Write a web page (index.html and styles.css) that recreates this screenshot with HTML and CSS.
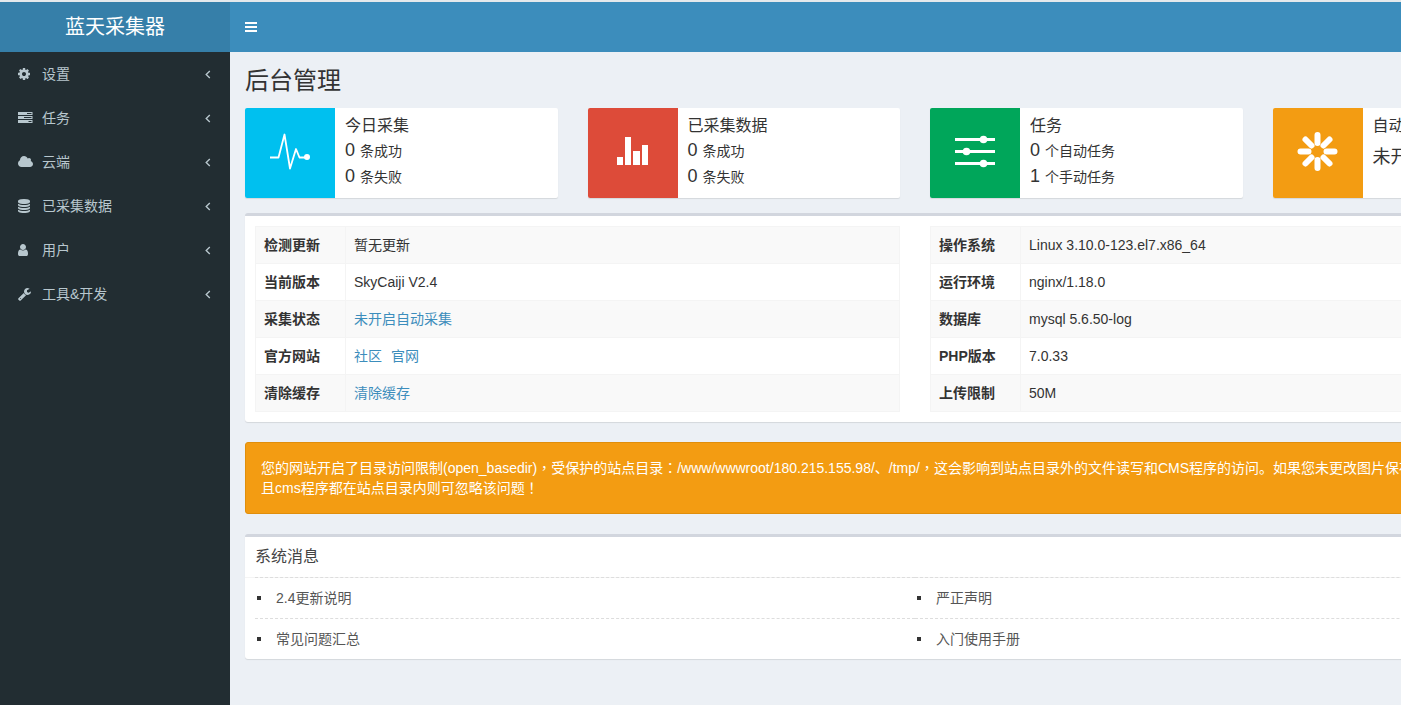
FILE: index.html
```html
<!DOCTYPE html>
<html lang="zh-CN">
<head>
<meta charset="utf-8">
<title>后台管理 - 蓝天采集器</title>
<link rel="stylesheet" href="styles.css">
</head>
<body>
<div class="wrapper">
  <header class="main-header">
    <a class="logo" href="#">蓝天采集器</a>
    <nav class="navbar">
      <button class="sidebar-toggle" type="button" aria-label="切换菜单">
        <svg width="12" height="14" viewBox="0 0 12 14" fill="currentColor"><path d="M0 2h12v2H0zM0 6h12v2H0zM0 10h12v2H0z"/></svg>
      </button>
    </nav>
  </header>
  <div class="body-row">
    <aside class="main-sidebar">
      <ul class="menu">
        <li><a href="#">
          <svg class="menu-icon" viewBox="128 0 2304 1792"><path d="M1152 896q0-106-75-181t-181-75-181 75-75 181 75 181 181 75 181-75 75-181zm512-109v222q0 12-8 23t-20 13l-185 28q-19 54-39 91 35 50 107 138 10 12 10 25t-9 23q-27 37-99 108t-94 71q-12 0-26-9l-138-108q-44 23-91 38-16 136-29 186-7 28-36 28h-222q-14 0-24.5-8.5t-11.5-21.5l-28-184q-49-16-90-37l-141 107q-10 9-25 9-14 0-25-11-126-114-165-168-7-10-7-23 0-12 8-23 15-21 51-66.5t54-70.5q-27-50-41-99l-183-27q-13-2-21-12.5t-8-23.5v-222q0-12 8-23t19-13l186-28q14-46 39-92-40-57-107-138-10-12-10-24 0-10 9-23 26-36 98.5-107.5t94.5-71.5q13 0 26 10l138 107q44-23 91-38 16-136 29-186 7-28 36-28h222q14 0 24.5 8.5t11.5 21.5l28 184q49 16 90 37l142-107q9-9 24-9 13 0 25 10 129 119 165 170 7 8 7 22 0 12-8 23-15 21-51 66.5t-54 70.5q26 50 41 98l183 28q13 2 21 12.5t8 23.5z"/></svg>
          <span>设置</span><svg class="arrow" viewBox="0 0 6 10"><path d="M5 1L1 5l4 4"/></svg></a></li>
        <li><a href="#">
          <svg class="menu-icon" viewBox="0 0 18 14"><path fill-rule="evenodd" d="M0 1h14.500v3H0zM9 2v1h4.500V2zM0 5h14.500v3H0zM6 6v1h7.500V6zM0 9h14.500v3H0zM10.500 10v1h3v-1z"/></svg>
          <span>任务</span><svg class="arrow" viewBox="0 0 6 10"><path d="M5 1L1 5l4 4"/></svg></a></li>
        <li><a href="#">
          <svg class="menu-icon" viewBox="64 0 2304 1792"><path d="M1984 1152q0 159-112.5 271.5t-271.5 112.5h-1088q-185 0-316.5-131.5t-131.5-316.5q0-132 71-241.5t187-163.5q-2-28-2-43 0-212 150-362t362-150q158 0 286.5 88t187.5 230q70-62 166-62 106 0 181 75t75 181q0 75-41 138 129 30 213 134.5t84 239.5z"/></svg>
          <span>云端</span><svg class="arrow" viewBox="0 0 6 10"><path d="M5 1L1 5l4 4"/></svg></a></li>
        <li><a href="#">
          <svg class="menu-icon" viewBox="128 0 2304 1792"><path d="M896 768q237 0 443-43t325-127v170q0 69-103 128t-280 93.5-385 34.5-385-34.5-280-93.5-103-128v-170q119 84 325 127t443 43zm0 768q237 0 443-43t325-127v170q0 69-103 128t-280 93.5-385 34.5-385-34.5-280-93.5-103-128v-170q119 84 325 127t443 43zm0-384q237 0 443-43t325-127v170q0 69-103 128t-280 93.5-385 34.5-385-34.5-280-93.5-103-128v-170q119 84 325 127t443 43zm0-1152q208 0 385 34.5t280 93.5 103 128v128q0 69-103 128t-280 93.5-385 34.5-385-34.5-280-93.5-103-128v-128q0-69 103-128t280-93.5 385-34.5z"/></svg>
          <span>已采集数据</span><svg class="arrow" viewBox="0 0 6 10"><path d="M5 1L1 5l4 4"/></svg></a></li>
        <li><a href="#">
          <svg class="menu-icon" viewBox="256 0 2304 1792"><path d="M1536 1399q0 109-62.5 187t-150.5 78h-854q-88 0-150.5-78t-62.5-187q0-85 8.5-160.5t31.5-152 58.5-131 94-89 134.5-34.5q131 128 313 128t313-128q76 0 134.5 34.5t94 89 58.5 131 31.5 152 8.5 160.5zm-256-887q0 159-112.5 271.5t-271.5 112.5-271.5-112.5-112.5-271.5 112.5-271.5 271.5-112.5 271.5 112.5 112.5 271.5z"/></svg>
          <span>用户</span><svg class="arrow" viewBox="0 0 6 10"><path d="M5 1L1 5l4 4"/></svg></a></li>
        <li><a href="#">
          <svg class="menu-icon" viewBox="64 0 2304 1792"><path d="M448 1472q0-26-19-45t-45-19-45 19-19 45 19 45 45 19 45-19 19-45zm644-420l-682 682q-37 37-90 37-52 0-91-37l-106-108q-38-36-38-90 0-53 38-91l681-681q39 98 114.5 173.5t173.5 114.5zm634-435q0 39-23 106-47 134-164.5 217.5t-258.5 83.5q-185 0-316.5-131.5t-131.5-316.5 131.5-316.5 316.5-131.5q58 0 121.5 16.5t107.5 46.5q16 11 16 28t-16 28l-293 169v224l193 107q5-3 79-48.5t135.5-81 70.5-35.5q15 0 23.5 10t8.5 25z"/></svg>
          <span>工具&amp;开发</span><svg class="arrow" viewBox="0 0 6 10"><path d="M5 1L1 5l4 4"/></svg></a></li>
      </ul>
    </aside>
    <main class="content">
      <h1 class="page-title">后台管理</h1>
      <section class="cards">
        <div class="info-box">
          <div class="info-icon aqua"><svg viewBox="0 0 90 90"><path d="M25 49.500h8.500l6-23 5.500 34 6-19.500 3.500 8.500H62" fill="none" stroke="#fff" stroke-width="1.800" stroke-linejoin="round"/><circle cx="62" cy="49" r="3" fill="#fff"/></svg></div>
          <div class="info-content"><h2>今日采集</h2><p><b>0 </b>条成功</p><p><b>0 </b>条失败</p></div>
        </div>
        <div class="info-box">
          <div class="info-icon red"><svg viewBox="0 0 90 90" fill="#fff"><path d="M29 49h6v8h-6zM37 29h6v28h-6zM45 43h7v14h-7zM54 37h6v20h-6z"/></svg></div>
          <div class="info-content"><h2>已采集数据</h2><p><b>0 </b>条成功</p><p><b>0 </b>条失败</p></div>
        </div>
        <div class="info-box">
          <div class="info-icon green"><svg viewBox="0 0 90 90" fill="#fff"><path d="M25 30h40v3H25zM25 42h40v3H25zM25 54h40v3H25z"/><circle cx="53.500" cy="31.500" r="3.800"/><circle cx="36.500" cy="43.500" r="3.800"/><circle cx="53.500" cy="55.500" r="3.800"/></svg></div>
          <div class="info-content"><h2>任务</h2><p><b>0 </b>个自动任务</p><p><b>1 </b>个手动任务</p></div>
        </div>
        <div class="info-box">
          <div class="info-icon yellow"><svg viewBox="0 0 90 90" fill="none" stroke="#fff" stroke-width="6" stroke-linecap="round"><path d="M44.500 27v8M44.500 52v8M27.500 43.500h8M53.500 43.500h8M32.500 31.500l6 6M50.500 49.500l6 6M32.500 55.500l6-6M50.500 37.500l6-6"/></svg></div>
          <div class="info-content"><h2>自动采集</h2><p class="status">未开启</p></div>
        </div>
      </section>

      <section class="box system">
        <table class="facts">
          <tr><th scope="row">检测更新</th><td>暂无更新</td></tr>
          <tr><th scope="row">当前版本</th><td>SkyCaiji V2.4</td></tr>
          <tr><th scope="row">采集状态</th><td><a href="#">未开启自动采集</a></td></tr>
          <tr><th scope="row">官方网站</th><td><div class="links"><a href="#">社区</a><a href="#">官网</a></div></td></tr>
          <tr><th scope="row">清除缓存</th><td><a href="#">清除缓存</a></td></tr>
        </table>
        <table class="facts">
          <tr><th scope="row">操作系统</th><td>Linux 3.10.0-123.el7.x86_64</td></tr>
          <tr><th scope="row">运行环境</th><td>nginx/1.18.0</td></tr>
          <tr><th scope="row">数据库</th><td>mysql 5.6.50-log</td></tr>
          <tr><th scope="row">PHP版本</th><td>7.0.33</td></tr>
          <tr><th scope="row">上传限制</th><td>50M</td></tr>
        </table>
      </section>

      <div class="alert" role="alert">您的网站开启了目录访问限制(open_basedir)<span class="mark" lang="zh-TW">，</span>受保护的站点目录<span class="mark" lang="zh-TW">：</span>/www/wwwroot/180.215.155.98/、/tmp/<span class="mark" lang="zh-TW">，</span>这会影响到站点目录外的文件读写和CMS程序的访问。如果您未更改图片保存<br>且cms程序都在站点目录内则可忽略该问题<span class="mark" lang="zh-TW">！</span></div>

      <section class="box">
        <h2 class="box-title">系统消息</h2>
        <ul class="news">
          <li><a href="#">2.4更新说明</a></li>
          <li><a href="#">严正声明</a></li>
          <li><a href="#">常见问题汇总</a></li>
          <li><a href="#">入门使用手册</a></li>
        </ul>
      </section>
    </main>
  </div>
</div>
</body>
</html>
```
FILE: styles.css
```css
* { box-sizing: border-box; }
html { overflow-x: hidden; }
body {
  margin: 0;
  font: 14px/20px "Liberation Sans", "Noto Sans CJK SC", sans-serif;
  color: #333;
  background: #ecf0f5;
  overflow-x: hidden;
}
h1, h2, p, ul { margin: 0; padding: 0; font-weight: 400; }
ul { list-style: none; }
a { color: #3c8dbc; text-decoration: none; }
svg { display: block; flex: none; }

.wrapper {
  min-width: 1600px;
  min-height: 100vh;
  display: flex;
  flex-direction: column;
  border-top: 2px solid #e4e9ec;
}
.main-header { display: flex; height: 50px; background: #3c8dbc; }
.logo {
  width: 230px;
  background: #367fa9;
  color: #fff;
  font-size: 20px;
  line-height: 50px;
  text-align: center;
}
.navbar { flex: 1; display: flex; }
.sidebar-toggle {
  border: 0;
  padding: 0 15px;
  background: none;
  color: #fff;
}
.body-row { flex: 1; display: flex; }
.main-sidebar { width: 230px; background: #222d32; }
.menu a {
  display: flex;
  align-items: center;
  height: 44px;
  padding: 0 19px 0 18px;
  gap: 6px;
  color: #b8c7ce;
}
.menu-icon { width: 18px; height: 14px; fill: currentColor; }
.arrow {
  width: 6px;
  height: 9px;
  margin-left: auto;
  fill: none;
  stroke: currentColor;
  stroke-width: 1.5;
}

.content { flex: 1; padding: 15px; }
.page-title { font-size: 24px; line-height: 28px; margin-bottom: 13px; }
.cards { display: grid; grid-template-columns: repeat(4, 1fr); gap: 30px; margin-bottom: 15px; }
.info-box {
  display: flex;
  min-height: 90px;
  background: #fff;
  border-radius: 2px;
  box-shadow: 0 1px 1px rgba(0, 0, 0, .1);
}
.info-icon { width: 90px; border-radius: 2px 0 0 2px; }
.aqua { background: #00c0ef; }
.red { background: #dd4b39; }
.green { background: #00a65a; }
.yellow { background: #f39c12; }
.info-content { padding: 5px 10px; }
.info-content h2 { font-size: 16px; line-height: 25px; }
.info-content p { line-height: 25px; }
.info-content b { font-size: 18px; font-weight: 400; }
.info-content .status { font-size: 18px; line-height: 38px; }

.box {
  background: #fff;
  border-top: 3px solid #d2d6de;
  border-radius: 3px;
  box-shadow: 0 1px 1px rgba(0, 0, 0, .1);
  margin-bottom: 20px;
}
.system {
  display: grid;
  grid-template-columns: 1fr 1fr;
  gap: 30px;
  padding: 10px;
}
.facts { width: 100%; border-collapse: collapse; table-layout: fixed; }
.facts th, .facts td { padding: 8px; border: 1px solid #f4f4f4; text-align: left; }
.facts th { width: 90px; }
.facts tr:nth-child(odd) { background: #f9f9f9; }
.links { display: flex; gap: 9px; }

.alert {
  padding: 15px;
  margin-bottom: 20px;
  border: 1px solid #e08e0b;
  border-radius: 3px;
  background: #f39c12;
  color: #fff;
}
.mark { font-family: "Liberation Sans", "Noto Sans CJK TC", sans-serif; line-height: 1; }
.box-title {
  padding: 10px;
  font-size: 16px;
  line-height: 20px;
  color: #444;
  border-bottom: 1px solid #f4f4f4;
}
.news { display: grid; grid-template-columns: 1fr 1fr; padding: 0 10px; margin-top: -1px; }
.news li {
  display: flex;
  align-items: center;
  gap: 15px;
  padding: 10px 2px;
  border-top: 1px dashed #ddd;
}
.news li::before { content: ""; width: 4px; height: 4px; background: #333; }
.news a { color: #555; }
```
